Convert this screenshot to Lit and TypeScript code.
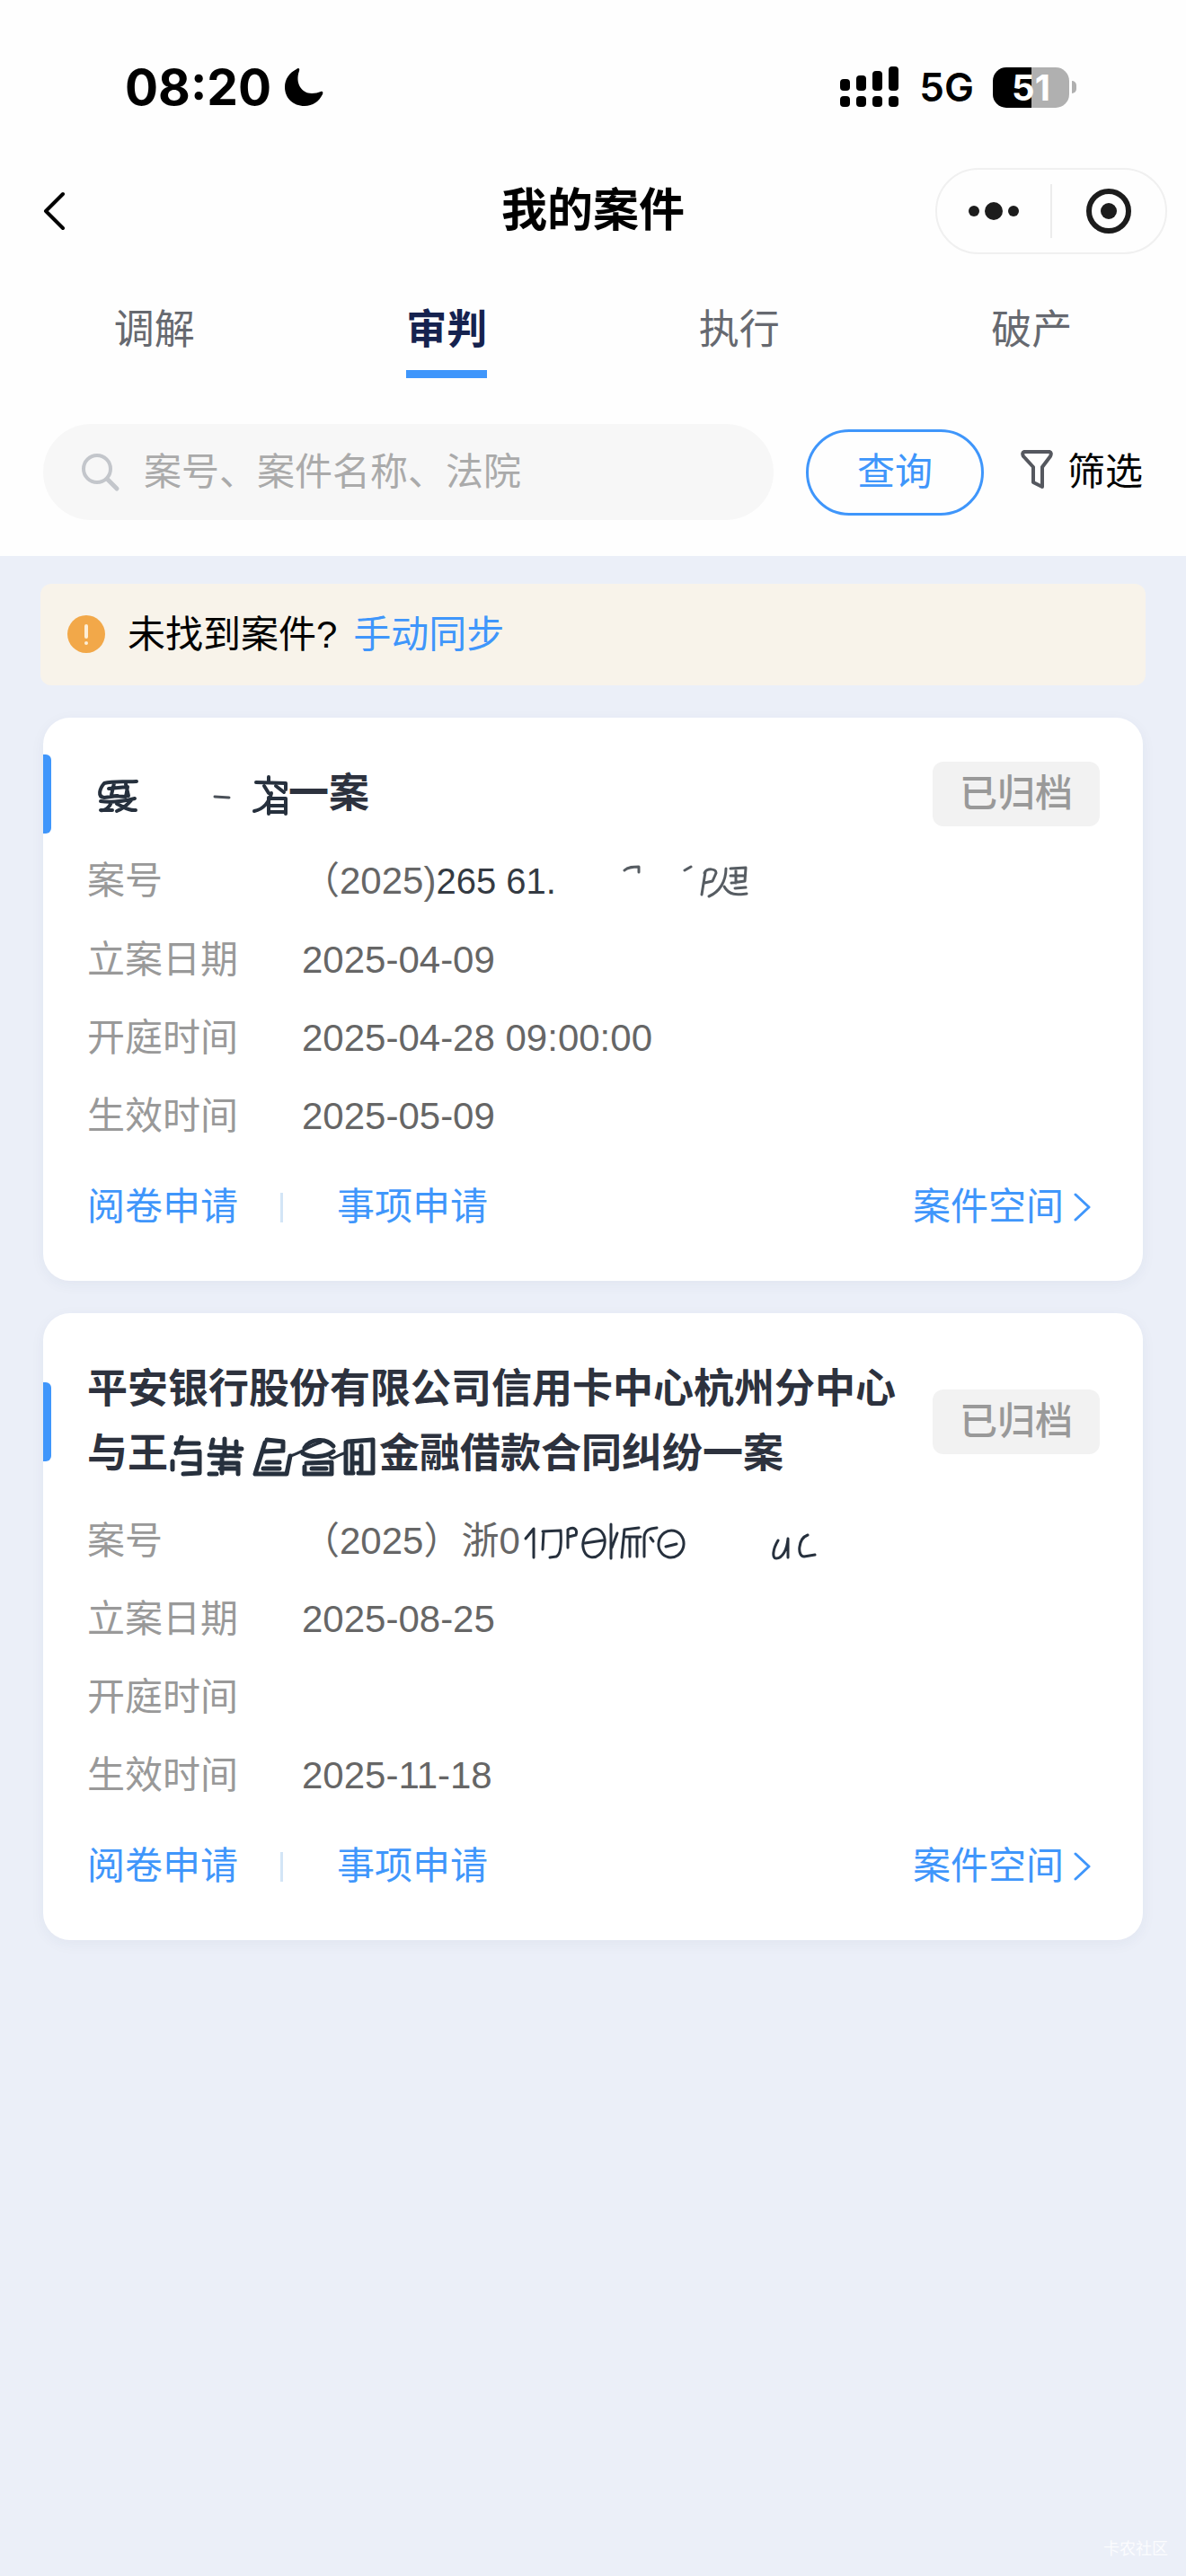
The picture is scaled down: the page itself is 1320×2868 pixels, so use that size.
import { LitElement, html, css, svg, nothing, type TemplateResult } from "lit";
import { customElement, property, state } from "lit/decorators.js";

interface CaseRecord {
  title: TemplateResult;
  status: string;
  number: TemplateResult;
  filed: string;
  hearing: string;
  effective: string;
}

/* Redaction marks left over personal data, drawn as loose pen strokes. */
const smear = (width: number, height: number, body: TemplateResult) =>
  html`<svg class="smear" width=${width} height=${height} viewBox="0 0 ${width} ${height}" aria-hidden="true">${body}</svg>`;

const partyMark = smear(224, 48, svg`
  <g stroke-width="4">
    <path d="M19 9C30 6 44 8 55 7M19 9C14 15 11 24 19 25L34 23M24 15L45 13L43 24L27 23M30 9L27 22M43 10L46 23"/>
    <path d="M15 29C26 31 40 29 53 26M27 30C25 36 20 40 15 39H28M33 32C40 35 46 40 54 39M49 28C44 34 38 38 33 40"/>
  </g>
  <path d="M142 24L158 25" stroke="#4a5058" stroke-width="3"/>
  <g stroke-width="4">
    <path d="M202 2V7M188 8L221 9V16"/>
    <path d="M197 12L202 20M210 12L219 19M205 20C203 30 196 38 186 40M202 25V43M204 26H221V43M204 34H221M204 41H221"/>
  </g>
`);

const numberMark = smear(220, 48, svg`
  <g stroke-width="3" stroke="#565c62">
    <path d="M76 9C80 5 86 5 92 5V11M143 9L150 5"/>
    <path d="M166 11L162 36M165 12C168 6 178 7 178 12L174 21L165 23M189 7C189 21 182 33 170 38"/>
    <path d="M194 7L211 6L210 21L195 23M194 15H210M200 9V23M187 27C193 38 203 36 212 35M199 29L211 28"/>
  </g>
`);

const defendantMark = smear(235, 48, svg`
  <g stroke-width="5">
    <path d="M15 2L9 20M9 9H34M9 19L35 18V42L17 43M17 31L32 32M5 29V38"/>
    <path d="M50 5L48 14M48 13L82 15M63 4V21M46 22L80 23M50 31H78V43M60 22V42M76 7V18M46 43H54M58 37H76"/>
    <path d="M110 5L128 7V15M108 8L97 43H132L136 23M106 18L128 17M110 30H124M106 37H124"/>
    <path d="M152 14C158 4 176 2 184 12M150 20C160 26 176 24 184 18M154 31L182 30V43H152V35M160 37H176"/>
    <path d="M198 8V42H206M205 10V42M205 20H214M205 31H214M200 7L228 5V42H212M215 12V40"/>
  </g>
  <path d="M136 23C148 20 156 12 170 8M180 24C184 28 188 22 196 20" stroke-width="3"/>
`);

const docketMark = smear(332, 48, svg`
  <g stroke-width="3">
    <path d="M6 18L15 7V39M26 12L25 30M25 10L45 9C46 24 45 36 40 38L33 39"/>
    <path d="M53 8V28M53 8C60 4 64 8 62 14L54 16"/>
    <ellipse cx="82" cy="23" rx="12" ry="16" transform="rotate(12 82 23)"/>
    <path d="M72 23L92 20M101 2V40M108 12L102 28"/>
    <path d="M116 8L113 39M116 8L132 6M118 16H134M122 17V38M130 17V38"/>
    <path d="M138 38V16C139 8 144 7 152 6M145 17L148 21"/>
    <ellipse cx="168" cy="24" rx="14" ry="15" transform="rotate(12 168 24)"/>
    <path d="M162 27L174 24M287 20C281 30 280 40 285 40C292 40 297 30 298 18V39M320 14C309 18 308 38 316 38L328 36"/>
  </g>
`);

const CASES: CaseRecord[] = [
  {
    title: html`${partyMark}一案`,
    status: "已归档",
    number: html`（2025)<span class="ink">265 61.</span>${numberMark}`,
    filed: "2025-04-09",
    hearing: "2025-04-28 09:00:00",
    effective: "2025-05-09",
  },
  {
    title: html`平安银行股份有限公司信用卡中心杭州分中心与王${defendantMark}金融借款合同纠纷一案`,
    status: "已归档",
    number: html`（2025）浙0${docketMark}`,
    filed: "2025-08-25",
    hearing: "",
    effective: "2025-11-18",
  },
];

@customElement("case-card")
export class CaseCard extends LitElement {
  @property({ attribute: false }) record!: CaseRecord;

  static styles = css`
    :host {
      display: block;
      background: #fff;
      border-radius: 30px;
      box-shadow: 0 4px 16px rgba(30, 50, 90, 0.05);
      padding: 49px 48px 52px 0;
      font-size: 42px;
      line-height: 60px;
    }
    .head {
      display: flex;
      align-items: center;
    }
    .bar {
      flex: none;
      width: 9px;
      height: 88px;
      margin: -8px 40px -8px 0;
      background: #3f96fb;
      border-radius: 0 6px 6px 0;
    }
    .title {
      flex: 1;
      margin: 0;
      padding-right: 40px;
      font-size: 45px;
      line-height: 72px;
      font-weight: 700;
      color: #2d323e;
    }
    .badge {
      flex: none;
      padding: 0 30px;
      line-height: 72px;
      border-radius: 12px;
      background: #f2f2f2;
      color: #999;
      font-weight: 500;
    }
    .smear {
      display: inline-block;
      vertical-align: middle;
      margin: -12px 0;
      fill: none;
      stroke: #26303d;
      stroke-linecap: round;
      stroke-linejoin: round;
    }
    .rows {
      display: grid;
      grid-template-columns: 239px 1fr;
      margin: 17px 0 0 49px;
      line-height: 87px;
    }
    dt {
      color: #999;
    }
    dd {
      margin: 0;
      color: #666;
      white-space: nowrap;
    }
    .ink {
      color: #343a42;
      font-size: 40px;
    }
    .actions {
      display: flex;
      align-items: center;
      margin: 28px 0 0 49px;
    }
    a {
      color: #3f96fb;
      text-decoration: none;
    }
    .sep {
      width: 3px;
      height: 33px;
      margin: 0 60px 0 47px;
      background: #d3e5f6;
    }
    .space {
      display: flex;
      align-items: center;
      gap: 10px;
      margin-left: auto;
      padding-right: 10px;
    }
  `;

  render() {
    const r = this.record;
    if (!r) return nothing;
    return html`
      <div class="head">
        <span class="bar"></span>
        <h2 class="title">${r.title}</h2>
        <span class="badge">${r.status}</span>
      </div>
      <dl class="rows">
        <dt>案号</dt><dd>${r.number}</dd>
        <dt>立案日期</dt><dd>${r.filed}</dd>
        <dt>开庭时间</dt><dd>${r.hearing}</dd>
        <dt>生效时间</dt><dd>${r.effective}</dd>
      </dl>
      <div class="actions">
        <a href="#review">阅卷申请</a>
        <span class="sep"></span>
        <a href="#matter">事项申请</a>
        <a class="space" href="#space">案件空间
          <svg width="20" height="34" viewBox="0 0 20 34" fill="none" stroke="#3f96fb" stroke-width="3" stroke-linecap="round" stroke-linejoin="round" aria-hidden="true"><path d="M3 3L18 17L3 31"/></svg>
        </a>
      </div>
    `;
  }
}

@customElement("app-root")
export class AppRoot extends LitElement {
  @state() private tab = "审判";

  static styles = css`
    :host {
      display: flex;
      flex-direction: column;
      min-height: 100vh;
      background: #ebeff8;
      font-family: "Liberation Sans", "Noto Sans CJK SC", sans-serif;
      font-size: 42px;
      line-height: 60px;
      color: #000;
    }
    * {
      box-sizing: border-box;
    }
    svg {
      display: block;
      flex: none;
    }
    button {
      font: inherit;
      color: inherit;
      background: none;
      border: 0;
      padding: 0;
      cursor: pointer;
    }
    .top {
      background: #fefefe;
      padding-bottom: 40px;
    }
    .status {
      display: flex;
      align-items: center;
      padding: 67px 122px 60px 139px;
      font-family: Inter, "Liberation Sans", sans-serif;
    }
    .time {
      font-size: 55px;
      font-weight: 700;
      margin-right: 14px;
    }
    .signal {
      margin-left: auto;
    }
    .net {
      font-size: 44px;
      font-weight: 600;
      margin: 0 21px 0 22px;
    }
    .battery {
      display: flex;
      align-items: center;
      gap: 3px;
    }
    .cell {
      width: 85px;
      height: 45px;
      border-radius: 15px;
      background: linear-gradient(90deg, #000 51%, #b0b0b0 51%);
      color: #fff;
      font-size: 40px;
      font-weight: 700;
      line-height: 45px;
      text-align: center;
    }
    .nub {
      width: 5px;
      height: 14px;
      border-radius: 0 5px 5px 0;
      background: #b0b0b0;
    }
    .nav {
      display: grid;
      grid-template-columns: 1fr auto 1fr;
      align-items: center;
      padding: 0 21px;
    }
    .nav h1 {
      margin: 0;
      font-size: 51px;
      font-weight: 700;
    }
    .nav .back {
      justify-self: start;
      padding-left: 27px;
    }
    .capsule {
      justify-self: end;
      display: flex;
      align-items: center;
      width: 258px;
      height: 96px;
      border: 2px solid #f0f0f0;
      border-radius: 48px;
    }
    .capsule button {
      flex: 1;
      display: flex;
      justify-content: center;
    }
    .rule {
      width: 2px;
      height: 60px;
      background: #ececec;
    }
    .tabs {
      display: flex;
      margin: 55px 9px 0;
    }
    .tab-slot {
      flex: 1;
      display: flex;
      justify-content: center;
    }
    .tab {
      font-size: 45px;
      line-height: 60px;
      padding-bottom: 14px;
      color: #666970;
      border-bottom: 9px solid transparent;
    }
    .tab[aria-selected="true"] {
      color: #15224f;
      font-weight: 700;
      border-color: #3f96fb;
    }
    .search {
      display: flex;
      align-items: center;
      margin: 51px 48px 0;
    }
    .field {
      flex: 1;
      min-width: 0;
      display: flex;
      align-items: center;
      gap: 26px;
      height: 107px;
      padding: 0 42px;
      border-radius: 54px;
      background: #f7f7f7;
    }
    .field input {
      flex: 1;
      min-width: 0;
      border: 0;
      outline: 0;
      padding: 0;
      background: none;
      font: inherit;
      color: #333;
    }
    .field input::placeholder {
      color: #aaa;
      opacity: 1;
    }
    .query {
      width: 198px;
      height: 96px;
      margin: 0 41px 0 36px;
      border: 3px solid #3f96fb;
      border-radius: 48px;
      color: #3f96fb;
    }
    .filter {
      display: flex;
      align-items: center;
      gap: 16px;
    }
    .notice {
      display: flex;
      align-items: center;
      margin: 31px 45px 36px;
      padding: 0 30px;
      height: 113px;
      border-radius: 12px;
      background: #f8f3ea;
    }
    .notice .ask {
      margin: 0 18px 0 24px;
    }
    .notice a {
      color: #3f96fb;
      text-decoration: none;
    }
    .list {
      display: flex;
      flex-direction: column;
      gap: 36px;
      padding: 0 48px;
    }
    .mark {
      margin: auto 20px 18px auto;
      font-size: 18px;
      line-height: 24px;
      color: #fbfcfe;
    }
  `;

  render() {
    return html`
      <header class="top">
        <div class="status">
          <span class="time">08:20</span>
          <svg width="44" height="44" viewBox="0 0 44 44" aria-hidden="true"><path d="M14 2C16 0 18 1 17 4C12 18 20 29 31 29C35 29 38 28 41 27C43 26 44 28 43 30C39 38 32 43 23 43C10 43 1 34 1 22C1 13 6 6 14 2Z"/></svg>
          <svg class="signal" width="66" height="46" viewBox="0 0 66 46" aria-hidden="true">
            <rect x="0" y="14" width="11" height="13" rx="4"/><rect x="18" y="10" width="11" height="17" rx="4"/><rect x="36" y="5" width="11" height="22" rx="4"/><rect x="54" y="0" width="11" height="27" rx="4"/>
            <rect x="0" y="33" width="11" height="12" rx="4"/><rect x="18" y="33" width="11" height="12" rx="4"/><rect x="36" y="33" width="11" height="12" rx="4"/><rect x="54" y="33" width="11" height="12" rx="4"/>
          </svg>
          <span class="net">5G</span>
          <span class="battery"><span class="cell">51</span><span class="nub"></span></span>
        </div>
        <nav class="nav">
          <button class="back" aria-label="返回">
            <svg width="26" height="44" viewBox="0 0 26 44" fill="none" stroke="#000" stroke-width="4" stroke-linecap="round" stroke-linejoin="round"><path d="M22 3L3 22L22 41"/></svg>
          </button>
          <h1>我的案件</h1>
          <div class="capsule">
            <button aria-label="更多"><svg width="60" height="24" viewBox="0 0 60 24" fill="#1c1c1c"><circle cx="8" cy="12" r="6"/><circle cx="30" cy="12" r="10"/><circle cx="52" cy="12" r="6"/></svg></button>
            <span class="rule"></span>
            <button aria-label="关闭"><svg width="52" height="52" viewBox="0 0 52 52"><circle cx="26" cy="26" r="22" fill="none" stroke="#1c1c1c" stroke-width="6"/><circle cx="26" cy="26" r="9" fill="#1c1c1c"/></svg></button>
          </div>
        </nav>
        <div class="tabs" role="tablist">
          ${["调解", "审判", "执行", "破产"].map((name) => html`
            <div class="tab-slot" role="presentation">
              <button class="tab" role="tab" aria-selected=${name === this.tab ? "true" : "false"} @click=${() => (this.tab = name)}>${name}</button>
            </div>`)}
        </div>
        <div class="search">
          <label class="field">
            <svg width="44" height="44" viewBox="0 0 44 44" fill="none" stroke="#c3c6cb" stroke-width="4" stroke-linecap="round" aria-hidden="true"><circle cx="18" cy="18" r="15"/><path d="M30 30L40 40" stroke-width="5"/></svg>
            <input type="text" aria-label="搜索案件" placeholder="案号、案件名称、法院" />
          </label>
          <button class="query">查询</button>
          <button class="filter">
            <svg width="36" height="52" viewBox="0 0 36 52" fill="none" stroke="#55585f" stroke-width="4" stroke-linejoin="round" aria-hidden="true"><path d="M4 3H32Q35 4 33 8L24 20V42L14 37V20L3 8Q1 4 4 3Z"/></svg>
            筛选
          </button>
        </div>
      </header>
      <main>
        <div class="notice">
          <svg width="43" height="43" viewBox="0 0 43 43" aria-hidden="true"><circle cx="21" cy="21" r="21" fill="#f2a849"/><path d="M21 12V24" stroke="#fdeed6" stroke-width="4" stroke-linecap="round"/><circle cx="21" cy="31" r="2" fill="#fdeed6"/></svg>
          <span class="ask">未找到案件?</span>
          <a href="#sync">手动同步</a>
        </div>
        <div class="list">
          ${CASES.map((c) => html`<case-card .record=${c}></case-card>`)}
        </div>
      </main>
      <footer class="mark">卡农社区</footer>
    `;
  }
}
